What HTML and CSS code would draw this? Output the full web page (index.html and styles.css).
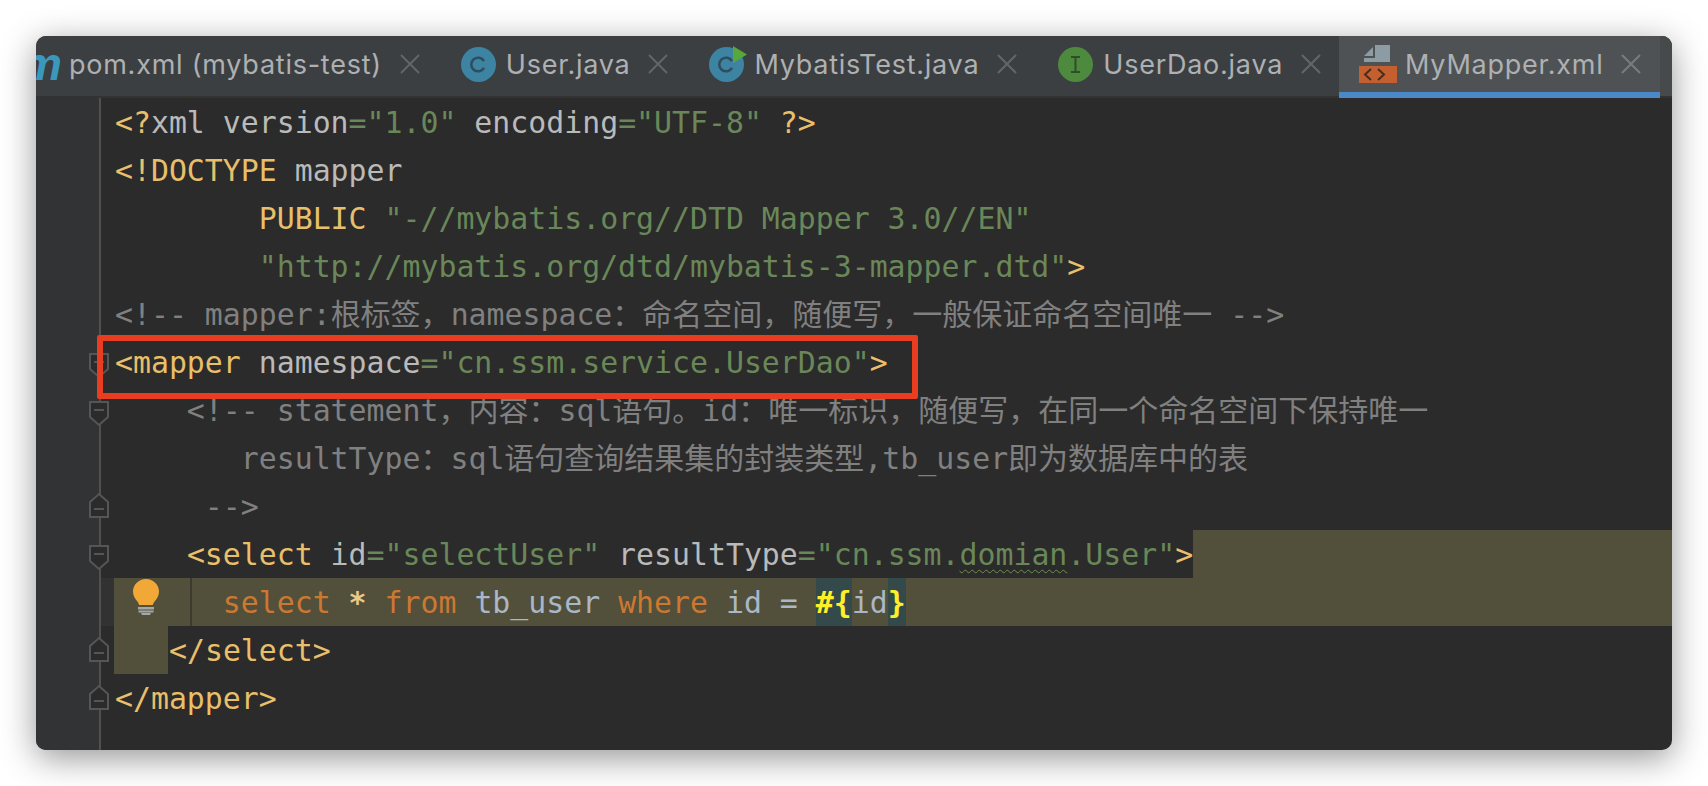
FILE: index.html
```html
<!DOCTYPE html>
<html lang="zh">
<head>
<meta charset="utf-8">
<title>MyMapper.xml</title>
<link rel="stylesheet" href="styles.css">
</head>
<body>
<div class="window">
  <div class="tabbar">
    <div class="tabs">
      <div class="tab tab-first">
        <span class="maven"><span class="maven-m">m</span></span>
        <span class="label">pom.xml (mybatis-test)</span>
        <svg class="close" viewBox="0 0 20 20"><path d="M1 1L19 19M19 1L1 19"/></svg>
      </div>
      <div class="tab">
        <svg class="ficon" viewBox="0 0 35 35"><circle cx="17.5" cy="17.5" r="17.5" fill="#3d84a3"/><path d="M23 14.2A6.8 6.8 0 1 0 23 20.8" class="cglyph"/></svg>
        <span class="label">User.java</span>
        <svg class="close" viewBox="0 0 20 20"><path d="M1 1L19 19M19 1L1 19"/></svg>
      </div>
      <div class="tab">
        <svg class="ficon" viewBox="0 0 35 35"><circle cx="17.5" cy="17.5" r="17.5" fill="#3d84a3"/><path d="M23 14.2A6.8 6.8 0 1 0 23 20.8" class="cglyph"/><path d="M24 -1L38 7.5L24 16Z" fill="#57a83b"/></svg>
        <span class="label">MybatisTest.java</span>
        <svg class="close" viewBox="0 0 20 20"><path d="M1 1L19 19M19 1L1 19"/></svg>
      </div>
      <div class="tab">
        <svg class="ficon" viewBox="0 0 35 35"><circle cx="17.5" cy="17.5" r="17.5" fill="#4d8a3d"/><path d="M13 10H22M13 25H22M17.5 10V25" class="iglyph"/></svg>
        <span class="label">UserDao.java</span>
        <svg class="close" viewBox="0 0 20 20"><path d="M1 1L19 19M19 1L1 19"/></svg>
      </div>
      <div class="tab tab-active">
        <svg class="xicon" viewBox="0 0 38 38"><path d="M14 2V11H5Z" fill="#8d9ba5"/><path d="M16 0H31V17H5V13H16Z" fill="#8d9ba5"/><rect y="21" width="38" height="17" fill="#c4602f"/><path d="M12 24L6 29.5L12 35M19 24L25 29.5L19 35" class="xglyph"/></svg>
        <span class="label">MyMapper.xml</span>
        <svg class="close" viewBox="0 0 20 20"><path d="M1 1L19 19M19 1L1 19"/></svg>
      </div>
    </div>
    <div class="tabbar-end"></div>
  </div>
  <div class="editor">
    <div class="row"><div class="gutter"></div><div class="code"><span class="t">&lt;?</span><span class="a">xml version</span><span class="s">="1.0"</span><span class="a"> encoding</span><span class="s">="UTF-8"</span><span class="t"> ?&gt;</span></div></div>
    <div class="row"><div class="gutter"></div><div class="code"><span class="t">&lt;!DOCTYPE</span><span class="a"> mapper</span></div></div>
    <div class="row"><div class="gutter"></div><div class="code">        <span class="t">PUBLIC</span> <span class="s">"-//mybatis.org//DTD Mapper 3.0//EN"</span></div></div>
    <div class="row"><div class="gutter"></div><div class="code">        <span class="s">"http://mybatis.org/dtd/mybatis-3-mapper.dtd"</span><span class="t">&gt;</span></div></div>
    <div class="row"><div class="gutter"></div><div class="code c">&lt;!-- mapper:<span class="z">根标签，</span>namespace<span class="z">：命名空间，随便写，一般保证命名空间唯一</span> --&gt;</div></div>
    <div class="row"><div class="gutter"><svg class="fold fold-open" viewBox="0 0 20 26"><path d="M1 1H19V16L10 24L1 16Z"/><path d="M5 9H15"/></svg></div><div class="code"><span class="t">&lt;mapper</span><span class="a"> namespace</span><span class="s">="cn.ssm.service.UserDao"</span><span class="t">&gt;</span></div></div>
    <div class="row"><div class="gutter"><svg class="fold fold-open" viewBox="0 0 20 26"><path d="M1 1H19V16L10 24L1 16Z"/><path d="M5 9H15"/></svg></div><div class="code c">    &lt;!-- statement<span class="z">，内容：</span>sql<span class="z">语句。</span>id<span class="z">：唯一标识，随便写，在同一个命名空间下保持唯一</span></div></div>
    <div class="row"><div class="gutter"></div><div class="code c">       resultType<span class="z">：</span>sql<span class="z">语句查询结果集的封装类型</span>,tb_user<span class="z">即为数据库中的表</span></div></div>
    <div class="row"><div class="gutter"><svg class="fold fold-close" viewBox="0 0 20 26"><path d="M1 25H19V10L10 2L1 10Z"/><path d="M5 17H15"/></svg></div><div class="code c">     --&gt;</div></div>
    <div class="row"><div class="gutter"><svg class="fold fold-open" viewBox="0 0 20 26"><path d="M1 1H19V16L10 24L1 16Z"/><path d="M5 9H15"/></svg></div><div class="code code-fit">    <span class="t">&lt;select</span><span class="a"> id</span><span class="s">="selectUser"</span><span class="a"> resultType</span><span class="s">="cn.ssm.<span class="typo">domian</span>.User"</span><span class="t">&gt;</span></div><div class="fill"></div></div>
    <div class="row row-caret"><div class="gutter"></div><div class="code code-hl">      <span class="k">select</span> <span class="star">*</span> <span class="k">from</span> <span class="p">tb_user</span> <span class="k">where</span> <span class="p">id</span> <span class="p">=</span> <span class="m">#{</span><span class="p">id</span><span class="m">}</span><span class="guide"></span><svg class="bulb" viewBox="0 0 26 36"><path d="M13 0C5.8 0 0 5.6 0 12.6C0 16.6 1.8 19.4 4 22C5.2 23.5 6 25 6.2 26H19.8C20 25 20.8 23.5 22 22C24.2 19.4 26 16.6 26 12.6C26 5.6 20.2 0 13 0Z" fill="#f2a836"/><path d="M5 28H21V30.5H5ZM5.5 31.5H20.5V33.5H5.5ZM8 34H18L17 36H9Z" fill="#a5a7a9"/></svg></div></div>
    <div class="row"><div class="gutter"><svg class="fold fold-close" viewBox="0 0 20 26"><path d="M1 25H19V10L10 2L1 10Z"/><path d="M5 17H15"/></svg></div><div class="code"><span class="hl-indent"></span><span class="t">&lt;/select&gt;</span></div></div>
    <div class="row"><div class="gutter"><svg class="fold fold-close" viewBox="0 0 20 26"><path d="M1 25H19V10L10 2L1 10Z"/><path d="M5 17H15"/></svg></div><div class="code"><span class="t">&lt;/mapper&gt;</span></div></div>
    <div class="row row-rest"><div class="gutter"></div><div class="code"></div></div>
    <div class="redbox"></div>
  </div>
</div>
</body>
</html>
```

FILE: styles.css
```css
html, body {
  margin: 0;
  height: 100%;
  overflow: hidden;
  background: #fff;
}
body {
  padding: 36px;
  box-sizing: border-box;
}
.window {
  width: 1636px;
  height: 714px;
  border-radius: 10px;
  overflow: hidden;
  display: flex;
  flex-direction: column;
  background: #2b2b2b;
  box-shadow: 0 8px 34px rgba(0, 0, 0, .42);
}
.tabbar {
  display: flex;
  flex: none;
  height: 62px;
  background: #3c3f41;
  box-shadow: inset 0 -2px #323232;
}
.tabs {
  display: flex;
  flex: 1;
  min-width: 0;
}
.tabbar-end {
  flex: none;
  width: 12px;
  height: 60px;
  background: #474a4a;
}
.tab {
  display: flex;
  align-items: center;
  flex: none;
  gap: 10px;
  height: 56px;
  padding: 0 18px 0 23px;
  font: 27px "Inter", "Liberation Sans", sans-serif;
  letter-spacing: .75px;
  color: #aeb0b2;
}
.tab-first {
  padding-left: 0;
}
.tab-active {
  flex: 1;
  background: #4e5254;
  border-bottom: 6px solid #4a88c7;
}
.label {
  white-space: nowrap;
  margin-right: 8px;
}
.maven {
  display: flex;
  justify-content: flex-end;
  width: 23px;
}
.maven-m {
  flex: none;
  margin-right: -3px;
  font: italic bold 46px/56px "Liberation Sans", sans-serif;
  letter-spacing: 0;
  color: #3b98bd;
}
.close {
  flex: none;
  width: 20px;
  height: 20px;
  fill: none;
  stroke: #62666a;
  stroke-width: 2;
}
.tab-active .close {
  stroke: #787c7f;
}
.ficon {
  flex: none;
  width: 35px;
  height: 35px;
  overflow: visible;
}
.cglyph {
  fill: none;
  stroke: #2f4d60;
  stroke-width: 2.6;
}
.iglyph {
  fill: none;
  stroke: #2f4f2a;
  stroke-width: 2;
}
.xicon {
  flex: none;
  width: 38px;
  height: 38px;
  margin: 0 -2px 0 -3px;
}
.xglyph {
  fill: none;
  stroke: #4a2c1c;
  stroke-width: 2;
}
.editor {
  position: relative;
  flex: 1;
  display: flex;
  flex-direction: column;
  min-height: 0;
  font: 29.85px/48px "DejaVu Sans Mono", "Noto Sans CJK SC", monospace;
  color: #bababa;
  white-space: pre;
}
.row {
  position: relative;
  display: flex;
  flex: none;
  height: 48px;
}
.row-rest {
  flex: 1;
}
.gutter {
  position: relative;
  flex: none;
  width: 63px;
  background: #313335;
  border-right: 2px solid #505050;
}
.code {
  flex: 1;
  min-width: 0;
  box-sizing: border-box;
  padding: 1px 0 0 14px;
}
.code-fit {
  flex: none;
}
.fill {
  flex: 1;
  background: #52503a;
}
.row-caret {
  background: #323232;
}
.code-hl {
  position: relative;
  margin-left: 13px;
  padding-left: 1px;
  background: #52503a;
}
.hl-indent {
  display: inline-block;
  width: 54px;
  height: 48px;
  margin: -1px 1px 0 -1px;
  vertical-align: top;
  background: #52503a;
}
.z { font-size: 30px; }
.t { color: #e8bf6a; }
.a { color: #bababa; }
.s { color: #6a8759; }
.c { color: #808080; }
.k { color: #cc7832; }
.p { color: #a9b7c6; }
.star { color: #e8c98a; font-weight: bold; }
.m {
  display: inline-block;
  height: 47px;
  color: #ffef28;
  background: #344a4a;
  box-shadow: 0 -1px #344a4a;
  font-weight: bold;
}
.typo {
  text-decoration: underline wavy #6f8f4f 1px;
  text-underline-offset: 4px;
}
.guide {
  position: absolute;
  left: 76px;
  top: 0;
  width: 2px;
  height: 48px;
  background: #3a3a30;
}
.bulb {
  position: absolute;
  left: 19px;
  top: 1px;
  width: 26px;
  height: 36px;
}
.fold {
  position: absolute;
  left: 53px;
  width: 20px;
  height: 26px;
  fill: #2b2b2b;
  stroke: #555;
  stroke-width: 2;
}
.fold-open { top: 15px; }
.fold-close { top: 10px; }
.redbox {
  position: absolute;
  left: 61px;
  top: 237px;
  width: 821px;
  height: 64px;
  box-sizing: border-box;
  border: 6px solid #e93d1f;
  border-radius: 2px;
}
```
